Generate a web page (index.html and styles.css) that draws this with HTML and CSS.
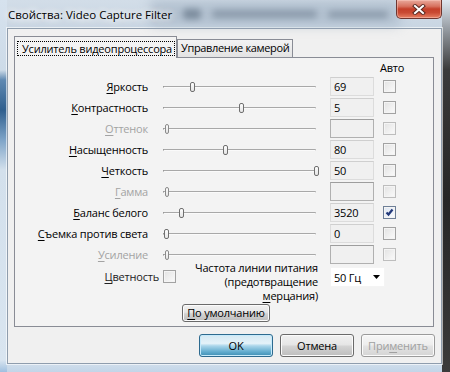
FILE: index.html
```html
<!DOCTYPE html>
<html>
	<head>
		<title>Свойства: Video Capture Filter</title>
		<meta charset="UTF-8">
		<link rel="stylesheet" href="styles.css">
	</head>
	<body>
		<div class="window">
			<div class="titlebar">
				<!-- размытые окна позади стекла -->
				<div class="behind b1"></div>
				<div class="behind b2"></div>
				<div class="behind b3"></div>
				<div class="behind b4"></div>
				<span class="title">Свойства: Video Capture Filter</span>
				<div class="close">
					<svg width="14" height="11" viewBox="0 0 14 11">
						<path d="M3 2 L11 9 M11 2 L3 9" stroke="#5b2a22" stroke-width="4" stroke-linecap="square"/>
						<path d="M3 2 L11 9 M11 2 L3 9" stroke="#fff" stroke-width="2" stroke-linecap="square"/>
					</svg>
				</div>
			</div>
			<div class="client">
				<div class="tabs">
					<div class="tab active"><span class="focus">Усилитель видеопроцессора</span></div>
					<div class="tab">Управление камерой</div>
				</div>
				<div class="page">
					<div class="grid">
						<div class="auto-head">Авто</div>

						<div class="lab"><u>Я</u>ркость</div>
						<div class="slider"><div class="track"><span class="thumb" style="left: 26px"></span></div></div>
						<div class="edit">69</div>
						<div class="chk"><span class="box"></span></div>

						<div class="lab"><u>К</u>онтрастность</div>
						<div class="slider"><div class="track"><span class="thumb" style="left: 75px"></span></div></div>
						<div class="edit">5</div>
						<div class="chk"><span class="box"></span></div>

						<div class="lab off"><u>О</u>ттенок</div>
						<div class="slider off"><div class="track"><span class="thumb" style="left: 1px"></span></div></div>
						<div class="edit off"></div>
						<div class="chk"><span class="box off"></span></div>

						<div class="lab"><u>Н</u>асыщенность</div>
						<div class="slider"><div class="track"><span class="thumb" style="left: 59px"></span></div></div>
						<div class="edit">80</div>
						<div class="chk"><span class="box"></span></div>

						<div class="lab"><u>Ч</u>еткость</div>
						<div class="slider"><div class="track"><span class="thumb" style="left: 150px"></span></div></div>
						<div class="edit">50</div>
						<div class="chk"><span class="box"></span></div>

						<div class="lab off"><u>Г</u>амма</div>
						<div class="slider off"><div class="track"><span class="thumb" style="left: 1px"></span></div></div>
						<div class="edit off"></div>
						<div class="chk"><span class="box off"></span></div>

						<div class="lab"><u>Б</u>аланс белого</div>
						<div class="slider"><div class="track"><span class="thumb" style="left: 15px"></span></div></div>
						<div class="edit">3520</div>
						<div class="chk">
							<span class="box checked">
								<svg width="11" height="11" viewBox="0 0 11 11"><path d="M2.5 5.5 L4.5 7.5 L8.5 2.5" fill="none" stroke="#22397a" stroke-width="2.2"/></svg>
							</span>
						</div>

						<div class="lab"><u>С</u>ъемка против света</div>
						<div class="slider"><div class="track"><span class="thumb" style="left: 0px"></span></div></div>
						<div class="edit">0</div>
						<div class="chk"><span class="box"></span></div>

						<div class="lab off"><u>У</u>силение</div>
						<div class="slider off"><div class="track"><span class="thumb" style="left: 1px"></span></div></div>
						<div class="edit off"></div>
						<div class="chk"><span class="box off"></span></div>
					</div>

					<div class="extra">
						<div class="color-part">
							<span class="color-lab"><u>Ц</u>ветность</span>
							<span class="box"></span>
						</div>
						<div class="freq">Частота линии питания<br>(предотвращение<br><u>м</u>ерцания)</div>
						<div class="combo">
							<span>50 Гц</span>
							<svg width="7" height="4" viewBox="0 0 7 4"><path d="M0 0 L7 0 L3.5 4 Z" fill="#000"/></svg>
						</div>
					</div>

					<div class="defaults"><button class="btn"><u>П</u>о умолчанию</button></div>
				</div>
				<div class="buttons">
					<button class="btn big ok">OK</button>
					<button class="btn big">Отмена</button>
					<button class="btn big disabled">При<u>м</u>енить</button>
				</div>
			</div>
		</div>
	</body>
</html>
```
FILE: styles.css
```css
/* common */
* {
	box-sizing: border-box;
}
html, body {
	margin: 0; padding: 0;
}
body {
	width: 450px; height: 372px; overflow: hidden; font-family: "Open Sans", "Noto Sans", sans-serif; font-size: 11px; letter-spacing: -0.2px; color: #000;
}
u {
	text-decoration: underline; text-underline-offset: 2px;
}

/* window frame (glass) */
.window {
	width: 450px; height: 372px; display: flex; flex-direction: column;
	background:
		linear-gradient(#dfe8f1 0, #8a8f95 34px, #3a3a3a 70px, #262626 200px, #3b3b3b 372px) right top / 8px 100% no-repeat,
		linear-gradient(#d6e2ee 0, #cddbe8 70px, #5f89b2 80px, #2f5f8e 110px, #7ea4c8 140px, #d3e0ec 170px, #d9e5f0 360px, #9fbfdf 372px) left top / 7px 100% no-repeat,
		linear-gradient(#d2dde8 0, #c8d5e2 30px, #d6e1ec 360px, #c2d5e8 372px);
}
.titlebar {
	position: relative; height: 28px; display: flex; align-items: flex-start; flex-shrink: 0;
}
.behind {
	position: absolute; background: #4f5f70; filter: blur(3px); opacity: 0.6; border-radius: 4px;
}
.b1 {
	left: 183px; top: 9px; width: 18px; height: 10px; opacity: 0.85;
}
.b2 {
	left: 212px; top: 10px; width: 105px; height: 8px;
}
.b3 {
	left: 328px; top: 11px; width: 60px; height: 7px;
}
.b4 {
	left: 150px; top: 0; width: 250px; height: 26px; background: #97a8ba; opacity: 0.5; filter: blur(6px);
}
.title {
	position: relative; margin: 7px 0 0 8px; line-height: 16px; font-size: 11.5px; letter-spacing: 0; text-shadow: 0 0 6px #fff, 0 0 10px #fff, 0 0 14px #fff;
}
.close {
	position: relative; margin-left: auto; margin-right: 8px; width: 46px; height: 19px; display: flex; align-items: center; justify-content: center;
	border: 1px solid #6e3630; border-top: none; border-radius: 0 0 5px 5px;
	background: linear-gradient(#e9a99b 0, #d7725f 35%, #c43f29 50%, #c94a33 70%, #e78063 100%);
	box-shadow: inset 0 0 0 1px rgba(255, 210, 200, 0.45);
}

/* client area */
.client {
	margin: 0 8px 8px 7px; flex: 1; background: #f0f0f0; border: 1px solid #8f9dad; box-shadow: 0 0 0 1px rgba(255, 255, 255, 0.6);
	display: flex; flex-direction: column;
}
.tabs {
	display: flex; align-items: flex-end; height: 28px; padding-left: 6px;
}
.tab {
	height: 18px; border: 1px solid #898c95; border-bottom: none; padding: 0 3px; line-height: 16px;
	background: linear-gradient(#f3f3f3, #e3e3e3); white-space: nowrap; letter-spacing: -0.35px;
}
.tab.active {
	position: relative; z-index: 1; height: 22px; margin-bottom: -1px; width: 163px; padding: 4px 1px 0 2px; background: #f3f3f3; letter-spacing: -0.2px;
}
.focus {
	display: block; height: 15px; line-height: 13px; border: 1px dotted #000; padding: 0 4px;
}
.page {
	height: 270px; margin-right: 7px; margin-left: 6px; border: 1px solid #898c95; background: #f3f3f3;
}

/* controls table */
.grid {
	display: grid; grid-template-columns: 136px 179px 44px 22px; grid-auto-rows: 21px; grid-template-rows: 18px;
}
.auto-head {
	grid-column: 4; padding: 1px 0 0 6px; line-height: 17px; white-space: nowrap;
}
.lab {
	grid-column: 1; text-align: right; padding-right: 3px; line-height: 21px; white-space: nowrap;
}
.off {
	color: #a3a3a3;
}
.slider {
	padding-left: 12px; display: flex; align-items: center;
}
.track {
	position: relative; width: 153px; height: 2px; border-top: 1px solid #a8a8a8; border-bottom: 1px solid #fafafa;
	border-left: 1px solid #8a8a8a; border-right: 1px solid #c8c8c8;
}
.thumb {
	position: absolute; top: -5px; width: 5px; height: 10px; border: 1px solid #6f6f6f; border-radius: 2px;
	background: linear-gradient(#fdfdfd, #e4e4e4);
}
.slider.off .thumb {
	border-color: #8a8a8a; width: 4px;
}
.edit {
	height: 19px; margin-top: 1px; border: 1px solid #dcdcdc; border-top-color: #cfcfcf; background: #f0f0f0; padding-left: 3px; line-height: 17px;
}
.edit.off {
	border-color: #b0b0b0; border-top-color: #9d9d9d;
}
.chk {
	padding-left: 9px; display: flex; align-items: center;
}
.box {
	display: block; width: 13px; height: 13px; border: 1px solid #a2a2a2; background: linear-gradient(135deg, #e2e2e2, #fbfbfb); box-shadow: inset 0 0 0 1px #f4f4f4;
}
.box.off {
	border-color: #bdbdbd;
}
.box.checked {
	border-color: #6e7f97; background: linear-gradient(135deg, #dde6f2, #fafbfd);
}
.box svg {
	display: block; margin: 0;
}

/* bottom of the page */
.extra {
	display: flex; height: 40px; margin-top: -3px;
}
.color-part {
	width: 161px; display: flex; justify-content: flex-end; align-items: flex-start; padding-top: 8px;
}
.color-lab {
	color: #222; line-height: 13px; margin-right: 4px;
}
.freq {
	width: 142px; text-align: right; line-height: 14px; margin-top: -1px;
}
.combo {
	margin: 5px 0 0 12px; width: 55px; height: 20px; background: #fff; border: 1px solid #f4f4f4;
	display: flex; align-items: center; padding: 0 4px 0 3px; justify-content: space-between;
}
.defaults {
	padding: 2px 0 0 167px;
}
.btn {
	display: block; font-family: inherit; font-size: 11px; letter-spacing: -0.2px; color: #000; width: 88px; height: 18px; padding: 0; line-height: 14px;
	border: 1px solid #6a6a6a; border-radius: 3px;
	background: linear-gradient(#f1f1f1 0, #e6e6e6 45%, #d2d2d2 55%, #bdbdbd 100%);
	box-shadow: inset 0 0 0 1px #fbfbfb;
}
.buttons {
	display: flex; justify-content: flex-end; gap: 7px; padding: 7px 6px 0 0;
}
.btn.big {
	width: 74px; height: 23px; line-height: 19px;
}
.btn.ok {
	border-color: #2d6a8f;
	background: linear-gradient(#d4e8f2 0, #e4f2f9 40%, #a9d5ea 52%, #62acce 80%, #3e8db3 100%);
	box-shadow: inset 0 0 0 1px #c6eafb;
}
.btn.disabled {
	color: #a0a0a0; border-color: #9a9a9a;
	background: linear-gradient(#f6f6f6 0, #eeeeee 45%, #e2e2e2 55%, #d4d4d4 100%);
}
```
